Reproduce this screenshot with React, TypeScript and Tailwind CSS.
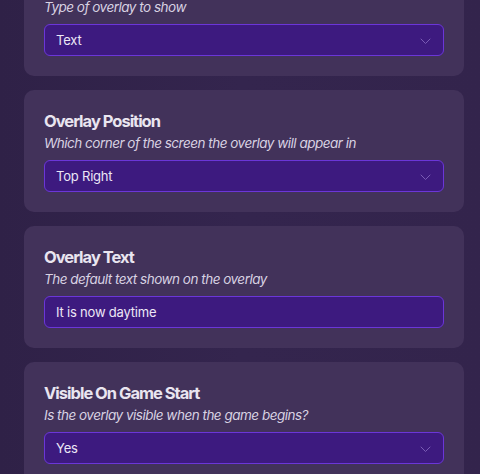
import React from "react";

type Field = {
  title: string;
  desc: string;
  value: string;
  select: boolean;
};

const fields: Field[] = [
  { title: "Overlay Type", desc: "Type of overlay to show", value: "Text", select: true },
  { title: "Overlay Position", desc: "Which corner of the screen the overlay will appear in", value: "Top Right", select: true },
  { title: "Overlay Text", desc: "The default text shown on the overlay", value: "It is now daytime", select: false },
  { title: "Visible On Game Start", desc: "Is the overlay visible when the game begins?", value: "Yes", select: true },
];

function Chevron() {
  return (
    <svg width="11" height="7" viewBox="0 0 11 7" fill="none" className="shrink-0">
      <path d="M1 1L5.5 5.5L10 1" stroke="#7a5cb5" strokeWidth="1" strokeLinecap="round" strokeLinejoin="round" />
    </svg>
  );
}

export default function App() {
  return (
    <div
      className="w-[480px] h-[474px] overflow-hidden bg-[#33244c] bg-gradient-to-r from-[#2f2147] via-[#34254e] to-[#33244c]"
      style={{ fontFamily: "Inter, 'Noto Sans', sans-serif" }}
    >
      <div className="flex flex-col gap-[14px] pl-6 -mt-[46px]">
        {fields.map((f) => (
          <div key={f.title} className="w-[440px] rounded-[10px] bg-[#42325a] px-5 pt-[21px] pb-5 flex flex-col">
            <div className="text-[16.5px] leading-5 font-bold tracking-[-1px] text-[#e9e5f0]">{f.title}</div>
            <div className="mt-[2px] text-[13.5px] leading-5 italic tracking-[-0.5px] text-[#d8d1e2]">{f.desc}</div>
            <div className="mt-[7px] h-8 w-[400px] rounded-[6px] border border-[#6b36d8] bg-[#3d1a7f] pl-[11px] pr-3 pt-[2px] flex items-center justify-between">
              <span className="text-[13px] tracking-[-0.2px] text-[#ece7f6]">{f.value}</span>
              {f.select && <Chevron />}
            </div>
          </div>
        ))}
      </div>
    </div>
  );
}
